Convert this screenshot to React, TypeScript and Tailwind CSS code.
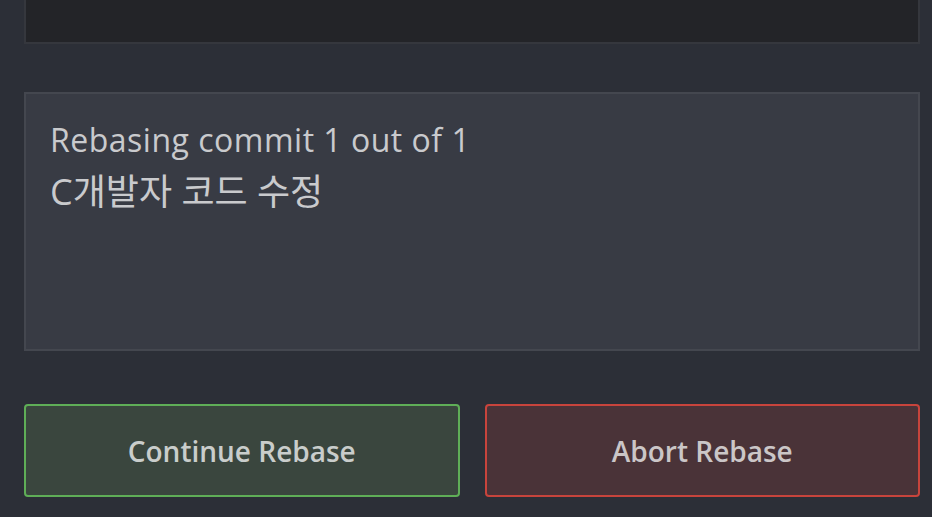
import React from 'react';

const font = { fontFamily: '"Open Sans", "Noto Sans CJK KR", sans-serif' };

export default function App() {
  return (
    <div className="h-[517px] w-[932px] overflow-hidden bg-[#2c2f37] pl-[24px] pr-[12px]" style={font}>
      {/* Output panel, scrolled mostly out of view */}
      <div className="h-[44px] border-2 border-t-0 border-[#35373d] bg-[#232428]" />

      {/* Rebase status */}
      <div className="mt-[48px] h-[259px] border-2 border-[#44474f] bg-[#383b44] px-[24px] pt-[24px] text-[#c9cacd]">
        <div className="text-[32px] leading-[44px] tracking-[0.5px]">Rebasing commit 1 out of 1</div>
        <div className="text-[36px] leading-[60px]">C개발자 코드 수정</div>
      </div>

      {/* Actions */}
      <div className="mt-[53px] grid grid-cols-2 gap-[25px]">
        <button className="h-[93px] rounded-[4px] border-2 border-[#5fae57] bg-[#3a463e] text-[28px] font-semibold text-[#c9cdcb]">
          Continue Rebase
        </button>
        <button className="h-[93px] rounded-[4px] border-2 border-[#c8443c] bg-[#4a3338] text-[28px] font-semibold text-[#cbc6c7]">
          Abort Rebase
        </button>
      </div>
    </div>
  );
}
